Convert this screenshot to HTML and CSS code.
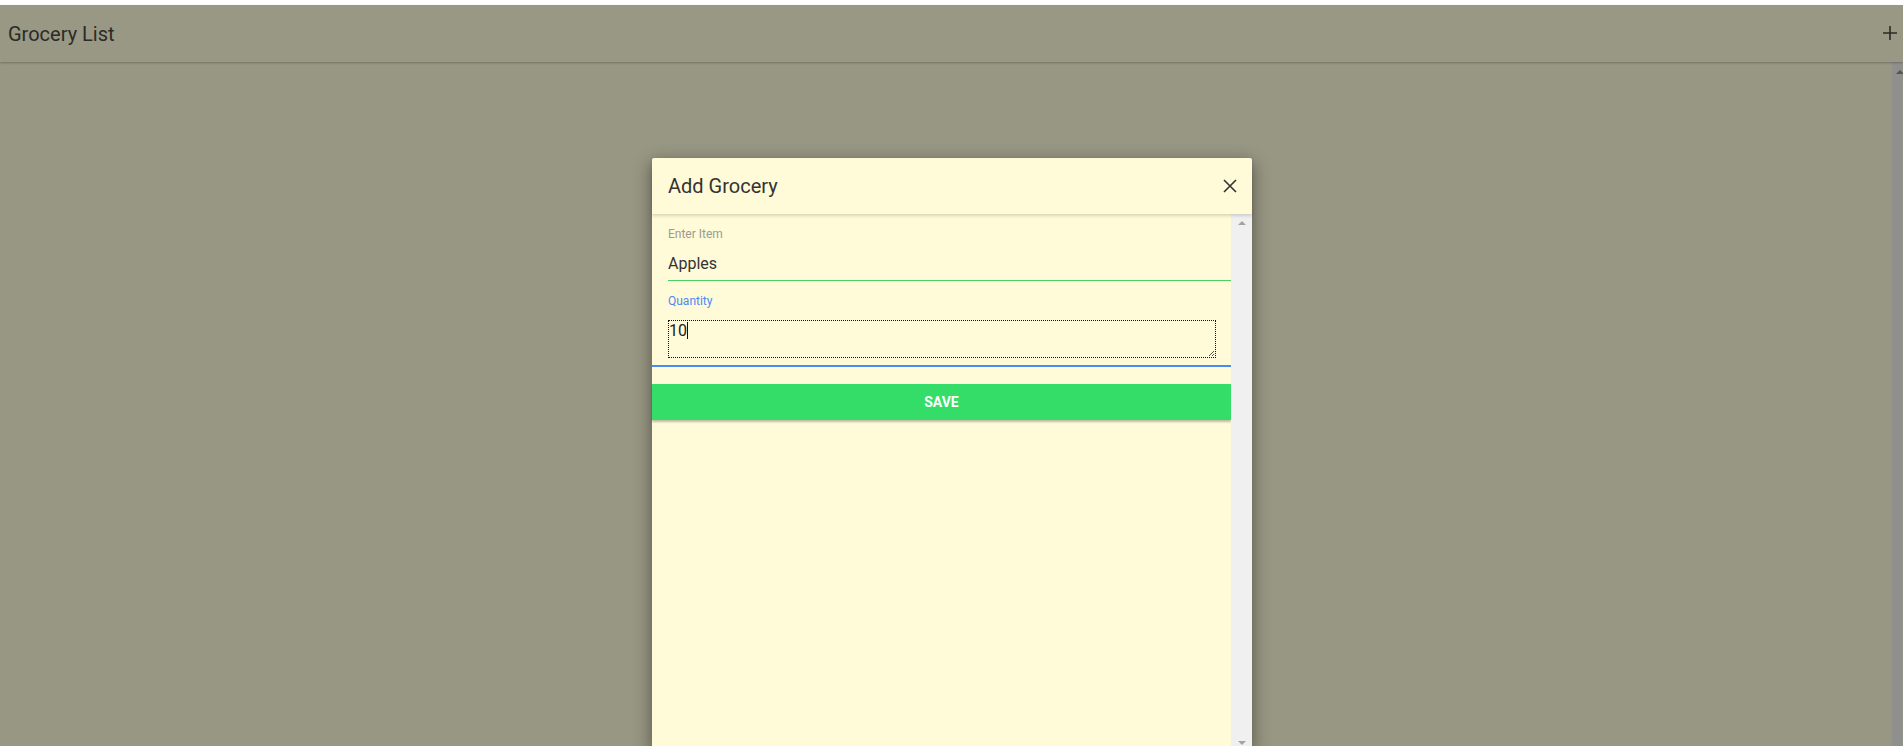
FILE: index.html
```html
<!DOCTYPE html>
<html>
<head>
<meta charset="utf-8">
<title>Grocery List</title>
<link rel="stylesheet" href="styles.css">
</head>
<body>
<div class="topstrip"></div>
<header class="appbar">
  <span class="appbar-title">Grocery List</span>
  <svg class="plus" width="16" height="16" viewBox="0 0 16 16"><path d="M8 1v14M1 8h14" stroke="#2b2b27" stroke-width="1.6" fill="none"/></svg>
</header>
<div class="page">
  <main class="page-content"></main>
  <div class="page-scrollbar"><span class="arrow-up dark"></span></div>
</div>

<div class="modal">
  <div class="modal-header">
    <span class="modal-title">Add Grocery</span>
    <svg class="close" width="16" height="16" viewBox="0 0 16 16"><path d="M2 2l12 12M14 2L2 14" stroke="#333" stroke-width="1.6" fill="none"/></svg>
  </div>
  <div class="modal-body">
    <div class="modal-content">
      <div class="field">
        <div class="label">Enter Item</div>
        <div class="input">Apples</div>
      </div>
      <div class="field field-qty">
        <div class="label label-active">Quantity</div>
        <div class="textarea">10<span class="caret"></span>
          <svg class="grip" width="8" height="8" viewBox="0 0 8 8"><path d="M7 2L2 7M7 5L5 7" stroke="#555" stroke-width="1" fill="none"/></svg>
        </div>
      </div>
      <div class="focus-line"></div>
      <button class="save">SAVE</button>
    </div>
    <div class="modal-scrollbar">
      <span class="arrow-up"></span>
      <span class="arrow-down"></span>
    </div>
  </div>
</div>
</body>
</html>
```

FILE: styles.css
```css
html, body {
  margin: 0;
  padding: 0;
  height: 100%;
  overflow: hidden;
}
body {
  background: #989783;
  font-family: Roboto, "Liberation Sans", sans-serif;
  position: relative;
}
.topstrip {
  height: 5px;
  background: #ffffff;
}
.appbar {
  height: 57px;
  box-sizing: border-box;
  display: flex;
  align-items: center;
  justify-content: space-between;
  padding: 0 5px 0 8px;
  background: #999884;
  box-shadow: 0 1px 2px rgba(0,0,0,0.25);
  position: relative;
  z-index: 1;
}
.appbar-title {
  font-size: 20px;
  color: #2b2b27;
}
.plus {
  display: block;
  margin-top: -2px;
}
.page {
  display: flex;
  height: calc(100% - 62px);
}
.page-content {
  flex: 1;
}
.page-scrollbar {
  width: 11px;
  background: #8f8f8c;
  position: relative;
}
.arrow-up, .arrow-down {
  position: absolute;
  left: 50%;
  width: 0;
  height: 0;
  border-left: 4px solid transparent;
  border-right: 4px solid transparent;
  transform: translateX(-50%);
}
.arrow-up {
  top: 7px;
  border-bottom: 4px solid #a3a3a3;
}
.arrow-up.dark {
  top: 8px;
  left: 8px;
  border-bottom-color: #55554f;
}
.arrow-down {
  bottom: 5px;
  border-top: 4px solid #a3a3a3;
}

.modal {
  position: absolute;
  top: 158px;
  left: 652px;
  width: 600px;
  background: #fffad7;
  box-shadow: 0 5px 18px rgba(0,0,0,0.45);
  border-radius: 2px 2px 0 0;
}
.modal-header {
  height: 56px;
  box-sizing: border-box;
  display: flex;
  align-items: center;
  justify-content: space-between;
  padding: 0 14px 0 16px;
  box-shadow: 0 2px 3px rgba(0,0,0,0.15);
  position: relative;
  z-index: 1;
}
.modal-title {
  font-size: 20px;
  color: #333333;
}
.close {
  display: block;
}
.modal-body {
  display: flex;
  height: 536px;
}
.modal-content {
  flex: 1;
  padding-top: 12px;
}
.field {
  padding-left: 16px;
}
.label {
  font-size: 12px;
  line-height: 16px;
  color: #9b9b94;
}
.label-active {
  color: #4a8af4;
}
.input {
  margin-top: 10px;
  font-size: 16px;
  line-height: 24px;
  color: #333;
  padding-bottom: 4px;
  border-bottom: 1px solid #4cd065;
}
.field-qty {
  margin-top: 12px;
}
.textarea {
  position: relative;
  margin-top: 11px;
  width: 548px;
  height: 38px;
  box-sizing: border-box;
  border: 1px dotted #111;
  padding: 1px 0 0 0;
  font-size: 16px;
  line-height: 18px;
  color: #222;
}
.caret {
  display: inline-block;
  width: 1px;
  height: 17px;
  background: #111;
  vertical-align: -3px;
}
.grip {
  position: absolute;
  right: 0;
  bottom: 0;
}
.focus-line {
  margin-top: 7px;
  height: 2px;
  background: #4a8af4;
}
.save {
  display: block;
  width: 100%;
  margin-top: 17px;
  height: 36px;
  border: none;
  background: #33dd68;
  color: #ffffff;
  font-family: Roboto, "Liberation Sans", sans-serif;
  font-weight: bold;
  font-size: 14px;
  box-shadow: 0 2px 2px rgba(0,0,0,0.25);
}
.modal-scrollbar {
  width: 21px;
  background: #f0f0f0;
  position: relative;
}
```
